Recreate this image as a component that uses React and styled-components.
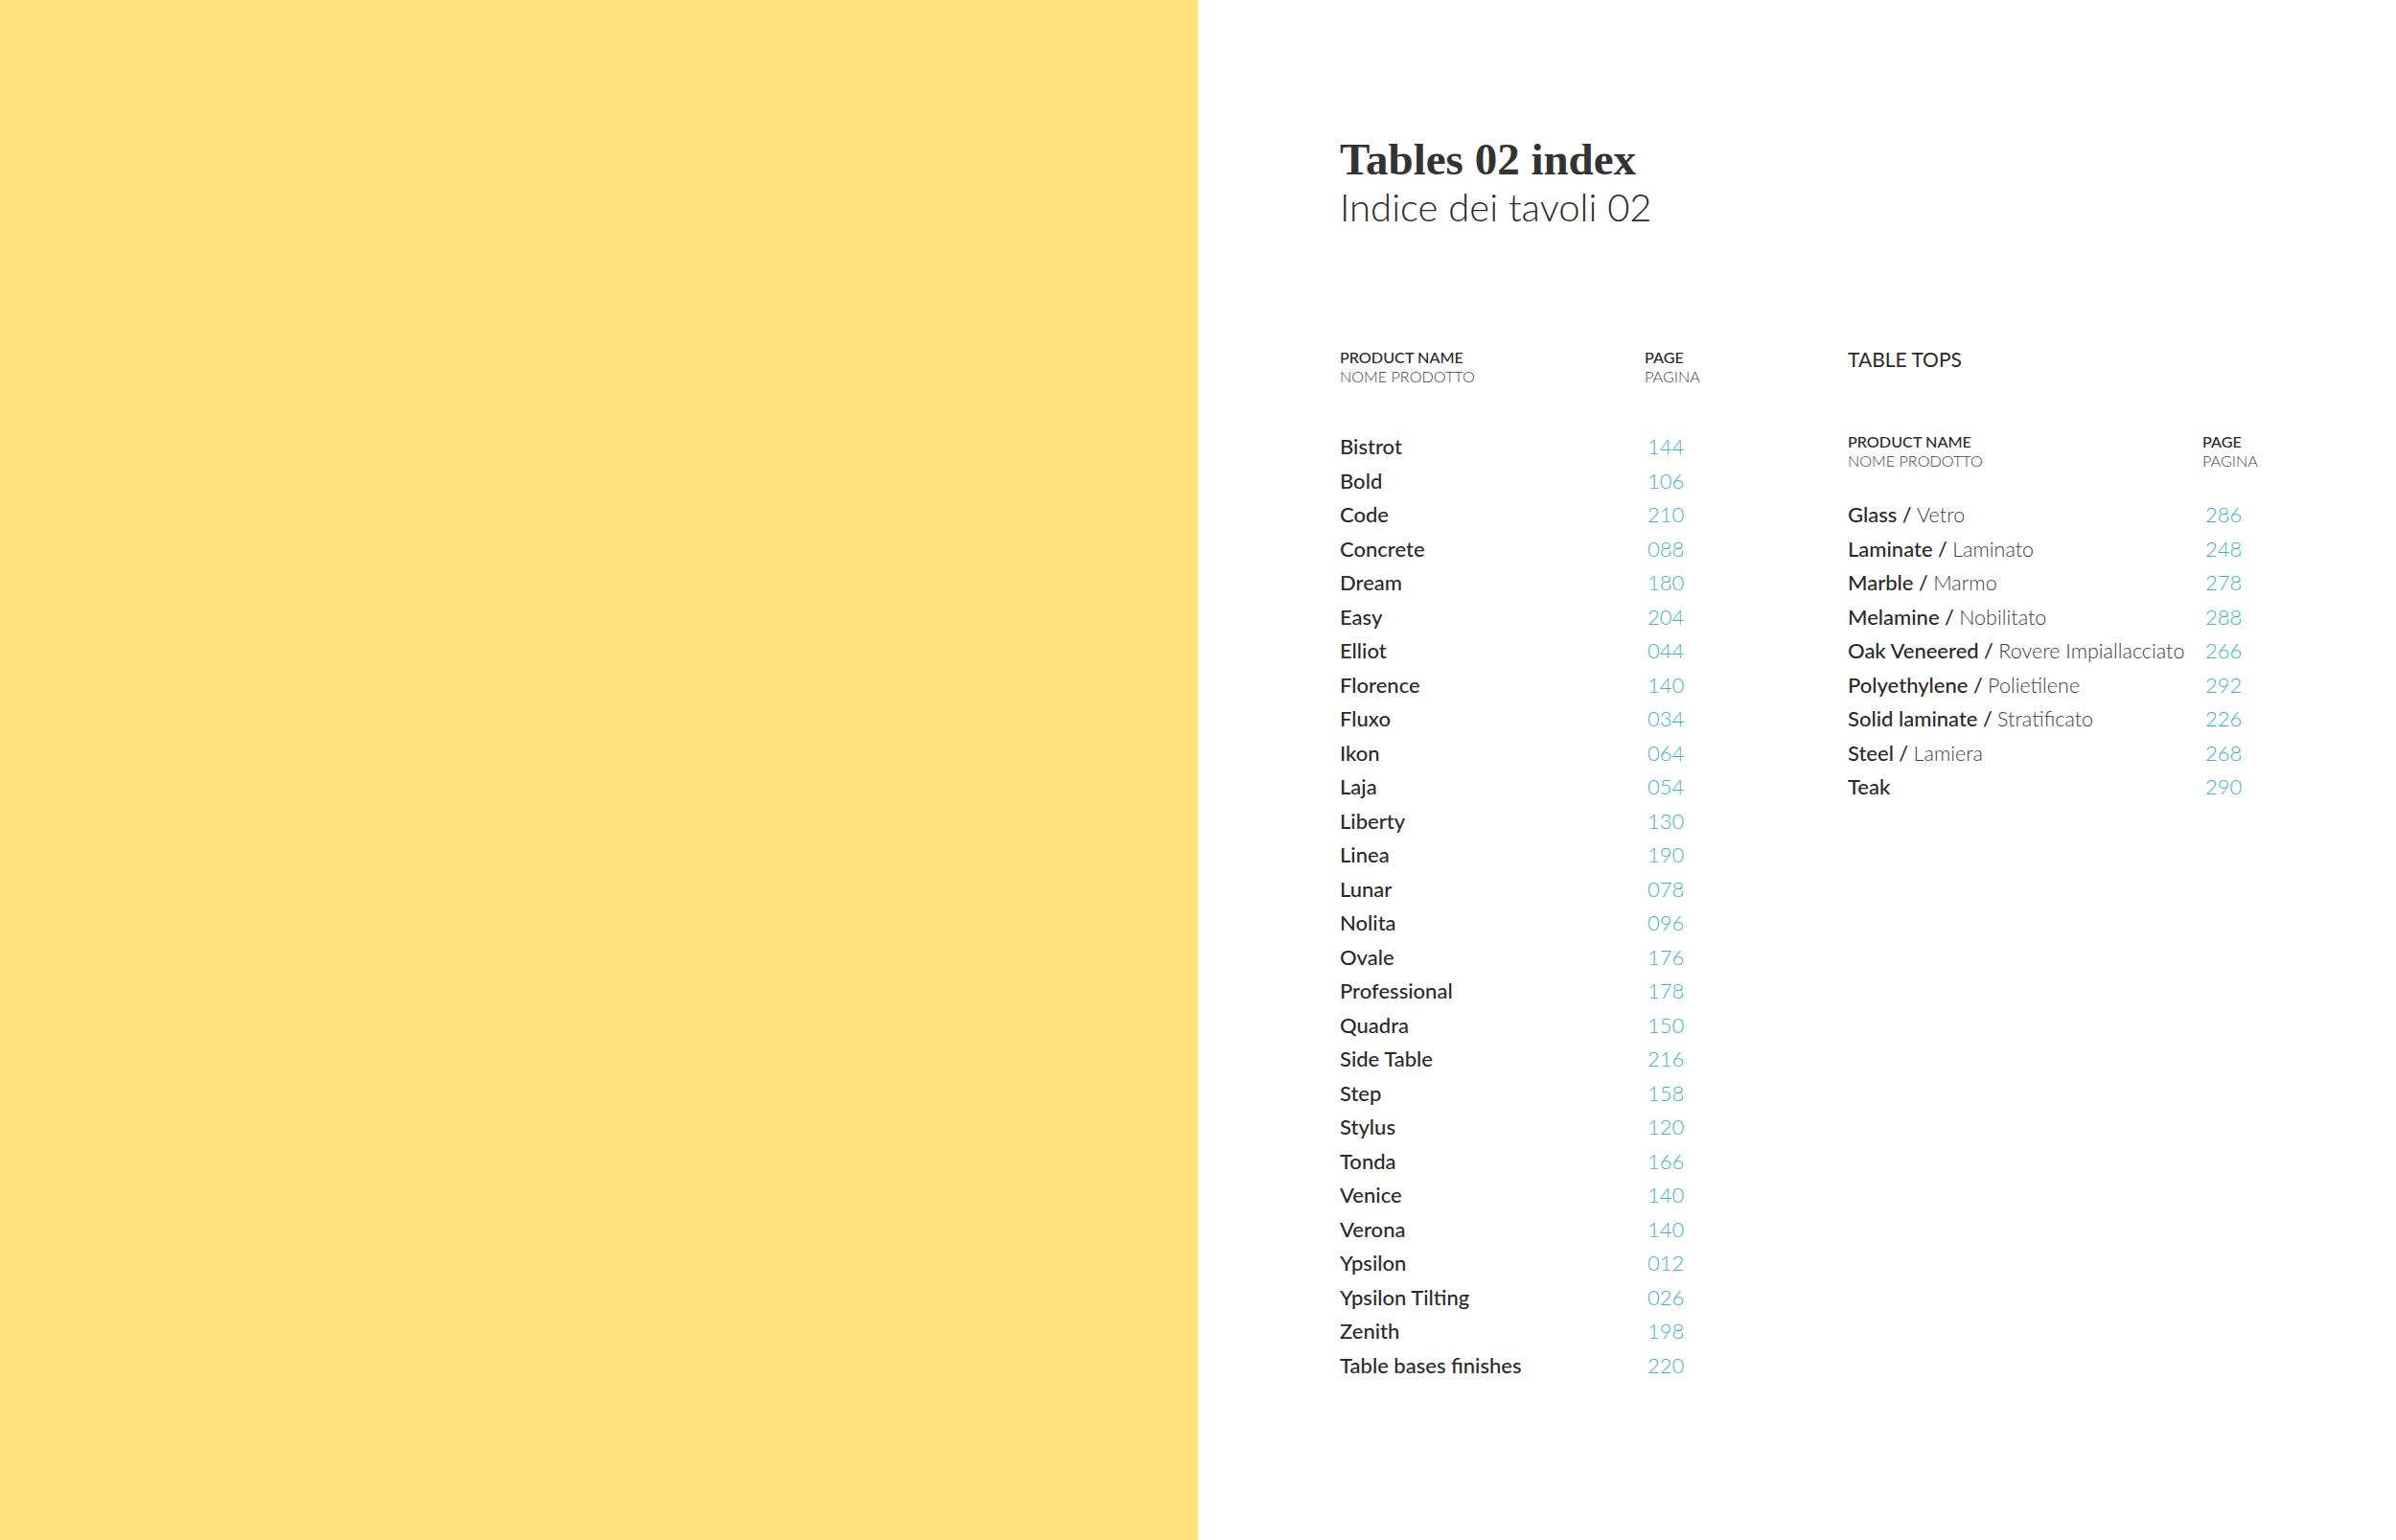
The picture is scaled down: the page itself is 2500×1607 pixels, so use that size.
import styled, { createGlobalStyle } from 'styled-components';

const GlobalStyle = createGlobalStyle`
  html, body {
    margin: 0;
    padding: 0;
    background: #ffffff;
  }
  body {
    font-family: "Lato", "Liberation Sans", sans-serif;
    color: #2a2a2a;
  }
`

const tables = [
  ['Bistrot', '144'], ['Bold', '106'], ['Code', '210'], ['Concrete', '088'],
  ['Dream', '180'], ['Easy', '204'], ['Elliot', '044'], ['Florence', '140'],
  ['Fluxo', '034'], ['Ikon', '064'], ['Laja', '054'], ['Liberty', '130'],
  ['Linea', '190'], ['Lunar', '078'], ['Nolita', '096'], ['Ovale', '176'],
  ['Professional', '178'], ['Quadra', '150'], ['Side Table', '216'], ['Step', '158'],
  ['Stylus', '120'], ['Tonda', '166'], ['Venice', '140'], ['Verona', '140'],
  ['Ypsilon', '012'], ['Ypsilon Tilting', '026'], ['Zenith', '198'],
  ['Table bases finishes', '220'],
]

const tops = [
  ['Glass', 'Vetro', '286'], ['Laminate', 'Laminato', '248'], ['Marble', 'Marmo', '278'],
  ['Melamine', 'Nobilitato', '288'], ['Oak Veneered', 'Rovere Impiallacciato', '266'],
  ['Polyethylene', 'Polietilene', '292'], ['Solid laminate', 'Stratificato', '226'],
  ['Steel', 'Lamiera', '268'], ['Teak', null, '290'],
]

const Page = styled.div`
  display: flex;
  width: 100%;
  min-height: 100vh;
`

const YellowPanel = styled.aside`
  flex: 0 0 1250px;
  background: #ffe07b;
`

const Content = styled.main`
  flex: 1;
  padding: 141px 0 0 148px;
`

const Title = styled.h1`
  margin: 0;
  font-family: "Liberation Serif", serif;
  font-weight: 700;
  font-size: 47px;
  line-height: 50px;
  color: #333333;
`

const Subtitle = styled.h2`
  margin: 0;
  font-weight: 300;
  font-size: 40px;
  line-height: 50px;
  color: #2a2a2a;
`

const Columns = styled.div`
  display: flex;
  margin-top: 122px;
`

const Block = styled.section`
  width: ${p => p.$width}px;
`

const SectionLabel = styled.div`
  font-size: 21px;
  font-weight: 400;
  line-height: 24px;
  text-transform: uppercase;
  color: #2a2a2a;
  margin-bottom: 64px;
`

const Head = styled.div`
  display: grid;
  grid-template-columns: ${p => p.$nameCol}px auto;
  margin-bottom: ${p => p.$gap}px;
`

const HeadCell = styled.div`
  display: flex;
  flex-direction: column;
  font-size: 16.2px;
  line-height: 20px;
  text-transform: uppercase;
`

const HeadMain = styled.span`
  font-weight: 500;
  color: #2a2a2a;
`

const HeadSub = styled.span`
  font-weight: 300;
  color: #3f3f3f;
`

const List = styled.ol`
  list-style: none;
  margin: 0;
  padding: 0;
`

const Row = styled.li`
  display: grid;
  grid-template-columns: ${p => p.$nameCol}px auto;
  align-items: center;
  height: 35.5px;
  font-size: 22px;
`

const Name = styled.span`
  font-weight: 500;
  color: #2a2a2a;
  white-space: nowrap;
`

const Translation = styled.span`
  font-weight: 300;
  color: #404040;
  font-size: 21.5px;
`

const PageNum = styled.span`
  font-weight: 300;
  color: #3fb4c6;
  padding-left: 3px;
`

function TableHead({ nameCol, gap }) {
  return (
    <Head $nameCol={nameCol} $gap={gap}>
      <HeadCell>
        <HeadMain>Product name</HeadMain>
        <HeadSub>Nome prodotto</HeadSub>
      </HeadCell>
      <HeadCell>
        <HeadMain>Page</HeadMain>
        <HeadSub>Pagina</HeadSub>
      </HeadCell>
    </Head>
  )
}

export default function App() {
  return (
    <>
      <GlobalStyle />
      <Page>
        <YellowPanel />
        <Content>
          <Title>Tables 02 index</Title>
          <Subtitle>Indice dei tavoli 02</Subtitle>

          <Columns>
            <Block $width={530}>
              <TableHead nameCol={318} gap={45} />
              <List>
                {tables.map(([name, page]) => (
                  <Row key={name} $nameCol={318}>
                    <Name>{name}</Name>
                    <PageNum>{page}</PageNum>
                  </Row>
                ))}
              </List>
            </Block>

            <Block $width={420}>
              <SectionLabel>Table tops</SectionLabel>
              <TableHead nameCol={370} gap={28} />
              <List>
                {tops.map(([name, tr, page]) => (
                  <Row key={name} $nameCol={370}>
                    <Name>
                      {name}
                      {tr && <Translation><Name as="span"> / </Name>{tr}</Translation>}
                    </Name>
                    <PageNum>{page}</PageNum>
                  </Row>
                ))}
              </List>
            </Block>
          </Columns>
        </Content>
      </Page>
    </>
  )
}
